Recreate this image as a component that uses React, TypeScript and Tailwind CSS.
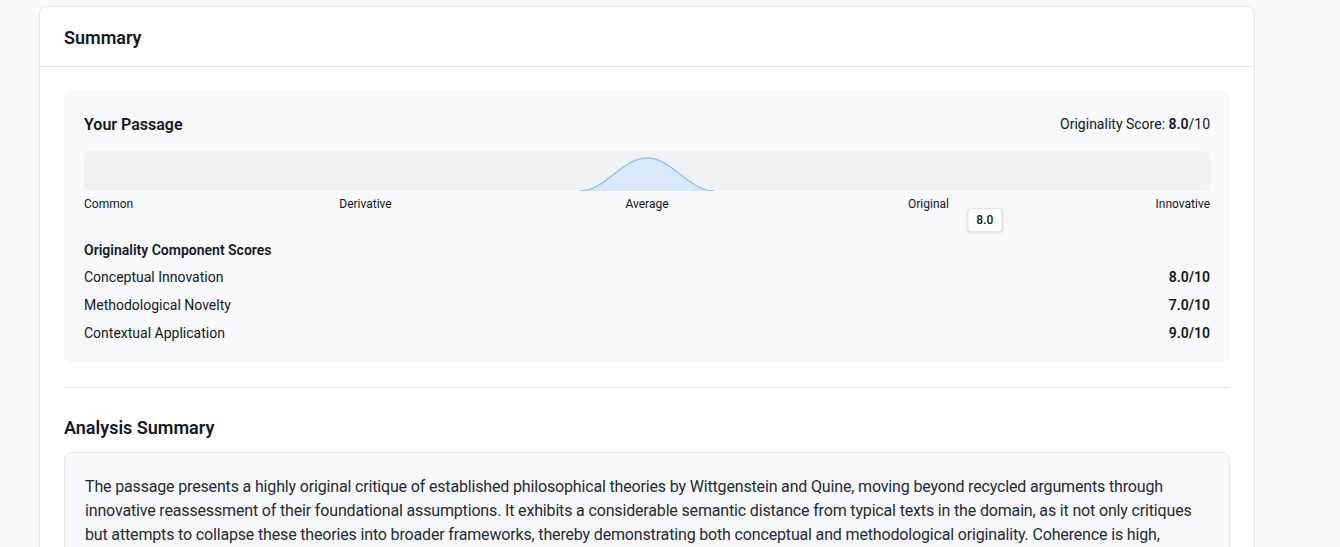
const LABELS = [
  { text: "Common", pos: "left-0" },
  { text: "Derivative", pos: "left-1/4 -translate-x-1/2" },
  { text: "Average", pos: "left-1/2 -translate-x-1/2" },
  { text: "Original", pos: "left-3/4 -translate-x-1/2" },
  { text: "Innovative", pos: "right-0" },
];

const COMPONENTS = [
  { name: "Conceptual Innovation", score: "8.0/10" },
  { name: "Methodological Novelty", score: "7.0/10" },
  { name: "Contextual Application", score: "9.0/10" },
];

// smooth bump drawn across the scale bar
function bellPath(w: number, h: number) {
  const pts: string[] = [];
  for (let i = 0; i <= 60; i++) {
    const x = (i / 60) * w;
    const t = (x - w / 2) / (w / 2);
    const y = h - (h - 1) * ((1 + Math.cos(Math.PI * t)) / 2);
    pts.push(`${x.toFixed(1)},${y.toFixed(1)}`);
  }
  return "M" + pts.join(" L");
}

export default function App() {
  const curve = bellPath(134, 34);
  return (
    <div className="min-h-screen bg-[#f8f9fa] pt-[6px] font-['Roboto',sans-serif] text-[#111827]">
      <div className="ml-[39px] w-[1216px] rounded-lg border border-[#e5e7eb] bg-white">
        <div className="flex h-[60px] items-center border-b border-[#e5e7eb] px-6">
          <h2 className="pt-[2px] text-lg font-semibold leading-7">Summary</h2>
        </div>

        <div className="px-6 pt-6">
          <div className="rounded-lg bg-[#f8f9fa] p-5">
            <div className="flex h-6 items-center justify-between">
              <h3 className="pt-[3px] text-base font-semibold leading-6">Your Passage</h3>
              <p className="pt-[1px] text-sm">
                Originality Score: <span className="font-semibold">8.0</span>/10
              </p>
            </div>

            <div className="relative mt-4 h-10 overflow-hidden rounded-md bg-[#f1f2f4]">
              <svg
                className="absolute bottom-0 left-1/2 -translate-x-1/2"
                width="134"
                height="34"
                viewBox="0 0 134 34"
              >
                <path d={curve + " Z"} fill="#d9e8f6" stroke="none" />
                <path d={curve} fill="none" stroke="#8cc2e6" strokeWidth="1.3" />
              </svg>
            </div>

            <div className="relative h-[46px] text-xs text-[#111827]">
              {LABELS.map((l) => (
                <span key={l.text} className={`absolute top-[5px] ${l.pos}`}>
                  {l.text}
                </span>
              ))}
              <div className="absolute left-[80%] top-[17px] -translate-x-1/2 rounded border border-[#e5e7eb] bg-white px-2 py-[3px] text-xs font-medium shadow-sm">
                8.0
              </div>
            </div>

            <h4 className="mt-[3px] text-sm font-semibold">Originality Component Scores</h4>
            <div className="mt-[7px] flex flex-col gap-2">
              {COMPONENTS.map((c) => (
                <div key={c.name} className="flex items-center justify-between text-sm leading-5">
                  <span>{c.name}</span>
                  <span className="font-semibold">{c.score}</span>
                </div>
              ))}
            </div>
          </div>

          <div className="mt-6 border-t border-[#e5e7eb]" />

          <h3 className="mt-[26px] text-lg font-semibold leading-7">Analysis Summary</h3>
          <div className="mt-[10px] rounded-lg border border-[#e5e7eb] bg-[#f8f9fa] px-5 pb-[21px] pt-[22px] text-base leading-6 tracking-[-0.01em] text-[#1f2937]">
            The passage presents a highly original critique of established philosophical theories by
            Wittgenstein and Quine, moving beyond recycled arguments through innovative reassessment of
            their foundational assumptions. It exhibits a considerable semantic distance from typical texts
            in the domain, as it not only critiques but attempts to collapse these theories into broader
            frameworks, thereby demonstrating both conceptual and methodological originality. Coherence is
            high, although occasional transitions could be developed further to strengthen the overall case.
          </div>
        </div>
        <div className="h-6" />
      </div>
    </div>
  );
}
